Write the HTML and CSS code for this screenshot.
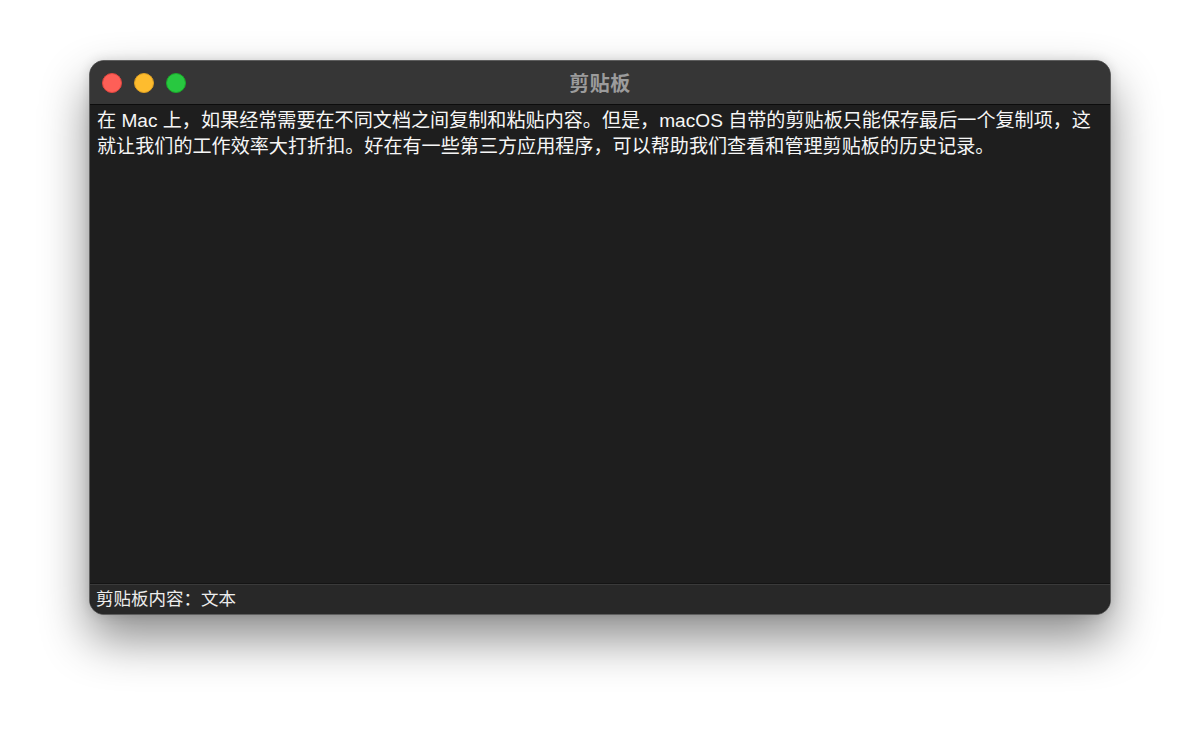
FILE: index.html
```html
<!DOCTYPE html>
<html lang="zh-CN">
<head>
<meta charset="utf-8">
<title>剪贴板</title>
<link rel="stylesheet" href="styles.css">
</head>
<body>
<div class="stage">
  <div class="window">
    <div class="titlebar">
      <div class="lights">
        <span class="light red"></span>
        <span class="light yellow"></span>
        <span class="light green"></span>
      </div>
      <div class="title">剪贴板</div>
    </div>
    <div class="content">在 Mac 上，如果经常需要在不同文档之间复制和粘贴内容。但是，macOS 自带的剪贴板只能保存最后一个复制项，这就让我们的工作效率大打折扣。好在有一些第三方应用程序，可以帮助我们查看和管理剪贴板的历史记录。</div>
    <div class="statusbar">剪贴板内容：文本</div>
  </div>
</div>
</body>
</html>
```
FILE: styles.css
```css
html, body {
  margin: 0;
  padding: 0;
  background: #ffffff;
}
body {
  width: 1200px;
  height: 732px;
  overflow: hidden;
  font-family: "Liberation Sans", "Noto Sans CJK SC", sans-serif;
}
.stage {
  padding: 60px 89px 0 89px;
}
.window {
  box-sizing: border-box;
  width: 1022px;
  height: 555px;
  border: 1px solid #5e5e5e;
  border-radius: 15px;
  background: #1e1e1e;
  overflow: hidden;
  display: flex;
  flex-direction: column;
  box-shadow: 0 24px 48px rgba(0, 0, 0, 0.45), 0 0 12px rgba(0, 0, 0, 0.12);
}
.titlebar {
  position: relative;
  height: 43px;
  flex: none;
  background: #363636;
  border-bottom: 1px solid #0c0c0c;
  display: flex;
  align-items: center;
  justify-content: center;
}
.lights {
  position: absolute;
  left: 12px;
  top: 12px;
  display: flex;
  gap: 12px;
}
.light {
  width: 20px;
  height: 20px;
  border-radius: 50%;
  box-sizing: border-box;
}
.red { background: #fe5f57; border: 1px solid #e2463f; }
.yellow { background: #febc2e; border: 1px solid #dea123; }
.green { background: #28c840; border: 1px solid #1aab29; }
.title {
  color: #9c9c9c;
  font-weight: bold;
  font-size: 20px;
  letter-spacing: 0.5px;
}
.content {
  flex: 1;
  color: #f6f6f6;
  font-size: 19.1px;
  line-height: 26px;
  padding: 3px 0 0 7px;
}
.statusbar {
  flex: none;
  height: 29px;
  background: #282828;
  border-top: 1px solid #3a3a3a;
  box-shadow: 0 -1px 0 #141414;
  color: #ededed;
  font-size: 17.5px;
  line-height: 29px;
  padding-left: 6px;
}
```
